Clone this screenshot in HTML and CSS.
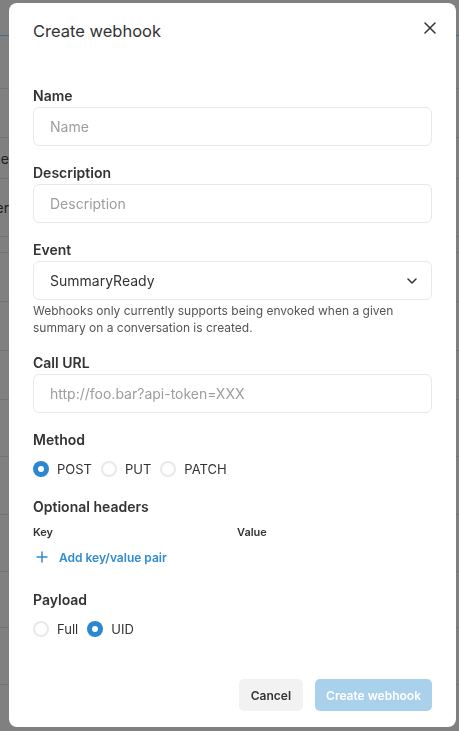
FILE: index.html
```html
<!DOCTYPE html>
<html lang="en">
<head>
<meta charset="utf-8">
<title>Create webhook</title>
<link rel="stylesheet" href="styles.css">
</head>
<body>
<div class="backdrop">
  <div class="row h35 blue"></div>
  <div class="row h54"></div>
  <div class="row h49"></div>
  <div class="row h41"><span class="frag">Name</span></div>
  <div class="row h58"><span class="frag">Owner</span></div>
  <div class="row h16"></div>
  <div class="row h49"></div>
  <div class="row h49"></div>
  <div class="row h49"></div>
  <div class="row h57"></div>
  <div class="row h58"></div>
  <div class="row h57"></div>
  <div class="row h56"></div>
  <div class="row h57"></div>
</div>

<div class="modal" role="dialog" aria-label="Create webhook">
  <div class="header">
    <h1 class="title">Create webhook</h1>
    <button class="close" aria-label="Close">
      <svg width="12" height="12" viewBox="0 0 12 12"><path d="M1 1L11 11M11 1L1 11" stroke="#333" stroke-width="1.5" stroke-linecap="round"/></svg>
    </button>
  </div>

  <div class="body">
    <div class="field">
      <label class="label">Name</label>
      <input class="input" placeholder="Name">
    </div>
    <div class="field">
      <label class="label">Description</label>
      <input class="input" placeholder="Description">
    </div>
    <div class="field">
      <label class="label">Event</label>
      <div class="input select">
        <span>SummaryReady</span>
        <svg width="10" height="6" viewBox="0 0 10 6"><path d="M1 1L5 5L9 1" fill="none" stroke="#333" stroke-width="1.5" stroke-linecap="round" stroke-linejoin="round"/></svg>
      </div>
      <p class="help">Webhooks only currently supports being envoked when a given summary on a conversation is created.</p>
    </div>
    <div class="field">
      <label class="label">Call URL</label>
      <input class="input" placeholder="http://foo.bar?api-token=XXX">
    </div>
    <div class="field method">
      <label class="label">Method</label>
      <div class="radios">
        <span class="opt"><span class="radio on"></span>POST</span>
        <span class="opt"><span class="radio"></span>PUT</span>
        <span class="opt"><span class="radio"></span>PATCH</span>
      </div>
    </div>
    <div class="field headers">
      <label class="label">Optional headers</label>
      <div class="kv">
        <span>Key</span>
        <span>Value</span>
      </div>
      <div class="add">
        <svg width="12" height="12" viewBox="0 0 12 12"><path d="M6 0.5V11.5M0.5 6H11.5" stroke="#2f8bd3" stroke-width="1.5"/></svg>
        <span>Add key/value pair</span>
      </div>
    </div>
    <div class="field">
      <label class="label">Payload</label>
      <div class="radios">
        <span class="opt"><span class="radio"></span>Full</span>
        <span class="opt"><span class="radio on"></span>UID</span>
      </div>
    </div>
  </div>

  <div class="footer">
    <button class="btn cancel">Cancel</button>
    <button class="btn primary">Create webhook</button>
  </div>
</div>
</body>
</html>
```

FILE: styles.css
```css
html, body {
  margin: 0;
  padding: 0;
  height: 100%;
  overflow: hidden;
}
body {
  background: #808080;
  font-family: Inter, "Noto Sans", sans-serif;
  color: #333;
}

.backdrop {
  display: flex;
  flex-direction: column;
}
.row {
  box-sizing: border-box;
  border-bottom: 1px solid #747474;
  display: flex;
  align-items: center;
}
.row.blue { border-bottom-color: #3e6d8f; }
.h16 { height: 16px; }
.h35 { height: 36px; }
.h41 { height: 41px; }
.h49 { height: 49px; }
.h54 { height: 53px; }
.h56 { height: 56px; }
.h57 { height: 57px; }
.h58 { height: 58px; }
.frag {
  width: 9px;
  overflow: hidden;
  display: flex;
  justify-content: flex-end;
  white-space: nowrap;
  font-size: 14px;
  color: #1e1e1e;
}

.modal {
  position: fixed;
  top: 3px;
  left: 9px;
  width: 447px;
  height: 724px;
  background: #fff;
  border-radius: 8px;
  display: flex;
  flex-direction: column;
  box-sizing: border-box;
}

.header {
  display: flex;
  justify-content: space-between;
  align-items: flex-start;
  padding: 16px 20px 0 24px;
}
.title {
  margin: 0;
  font-size: 16.5px;
  line-height: 24px;
  font-weight: 400;
  color: #333;
}
.close {
  border: 0;
  background: none;
  padding: 0;
  margin-top: 3px;
  width: 12px;
  height: 12px;
  display: block;
}
.close svg { display: block; }

.body {
  padding: 42px 24px 0;
}
.field {
  display: flex;
  flex-direction: column;
  margin-bottom: 16px;
}
.label {
  font-size: 14px;
  line-height: 21px;
  font-weight: 600;
  color: #333;
  margin-bottom: 1px;
}
.input {
  height: 39px;
  box-sizing: border-box;
  border: 1px solid #e8e8e8;
  border-radius: 6px;
  padding: 0 16px;
  font-family: Inter, "Noto Sans", sans-serif;
  font-size: 14px;
  color: #333;
  outline: none;
  background: #fff;
}
.input::placeholder { color: #9d9d9d; }
.select {
  display: flex;
  align-items: center;
  justify-content: space-between;
  padding-right: 14px;
}
.select svg { display: block; }
.help {
  margin: 2px 0 0;
  font-size: 12px;
  line-height: 17px;
  color: #555;
}

.radios {
  display: flex;
  align-items: center;
  gap: 9px;
  height: 20px;
  margin-top: 8px;
}
.method { margin-bottom: 17px; }
.opt {
  display: flex;
  align-items: center;
  gap: 8px;
  font-size: 13px;
  color: #333;
}
.radio {
  width: 16px;
  height: 16px;
  box-sizing: border-box;
  border-radius: 50%;
  border: 2px solid #e9e9e9;
  display: flex;
  align-items: center;
  justify-content: center;
}
.radio.on {
  border: 0;
  background: #2b88d0;
}
.radio.on::after {
  content: "";
  width: 6px;
  height: 6px;
  border-radius: 50%;
  background: #fff;
}

.headers { margin-bottom: 22px; }
.kv {
  display: grid;
  grid-template-columns: 204px 1fr;
  margin-top: 6px;
  height: 16px;
  align-items: center;
  font-size: 11px;
  font-weight: 600;
  color: #333;
}
.add {
  display: flex;
  align-items: center;
  gap: 11px;
  margin-top: 7px;
  height: 20px;
  padding-left: 3px;
  font-size: 12px;
  font-weight: 600;
  color: #2f8bd3;
}
.add svg { display: block; }

.footer {
  margin-top: auto;
  display: flex;
  justify-content: flex-end;
  gap: 12px;
  padding: 0 24px 16px;
}
.btn {
  height: 32px;
  border: 0;
  border-radius: 5px;
  padding: 0 12px;
  font-family: Inter, "Noto Sans", sans-serif;
  font-size: 12px;
  font-weight: 600;
}
.cancel {
  background: #f2f2f2;
  color: #333;
}
.primary {
  background: #a9d1ec;
  color: #fff;
  padding: 0 11px;
}
```
